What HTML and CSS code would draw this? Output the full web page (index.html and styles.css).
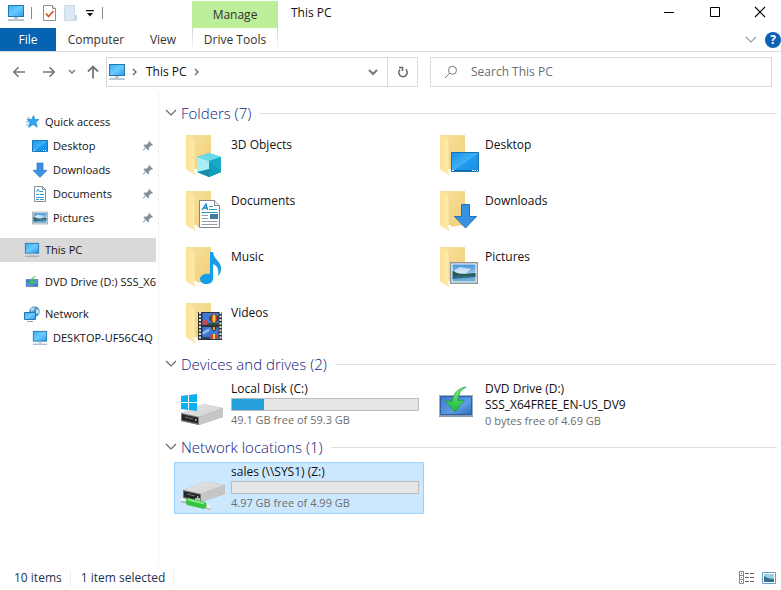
FILE: index.html
```html
<!DOCTYPE html>
<html lang="en">
<head>
<meta charset="utf-8">
<title>This PC</title>
<link rel="stylesheet" href="styles.css">
</head>
<body>
<svg class="defs" aria-hidden="true">
  <defs>
    <linearGradient id="screen" x1="0" y1="0" x2="1" y2="1"><stop offset="0" stop-color="#36b0f5"/><stop offset=".5" stop-color="#6bcaff"/><stop offset="1" stop-color="#2b9bed"/></linearGradient>
    <linearGradient id="desk" x1="0" y1="0" x2="1" y2="1"><stop offset="0" stop-color="#1593ea"/><stop offset=".5" stop-color="#42b0f6"/><stop offset=".52" stop-color="#229cee"/><stop offset="1" stop-color="#148eea"/></linearGradient>
    <linearGradient id="flap" x1="0" y1="0" x2="1" y2="0"><stop offset="0" stop-color="#fbe294"/><stop offset="1" stop-color="#fdeaac"/></linearGradient>
    <linearGradient id="back" x1="0" y1="0" x2="1" y2="1"><stop offset="0" stop-color="#f9e19c"/><stop offset="1" stop-color="#efcf79"/></linearGradient>
    <linearGradient id="sky" x1="0" y1="0" x2="0" y2="1"><stop offset="0" stop-color="#4593dc"/><stop offset="1" stop-color="#e2f3fb"/></linearGradient>
    <linearGradient id="metal" x1="0" y1="0" x2="1" y2="1"><stop offset="0" stop-color="#e6e6e6"/><stop offset="1" stop-color="#d0d0d0"/></linearGradient>
    <linearGradient id="green" x1="0" y1="0" x2="0" y2="1"><stop offset="0" stop-color="#85f18c"/><stop offset="1" stop-color="#12b932"/></linearGradient>
    <linearGradient id="panel" x1="0" y1="0" x2="1" y2="1"><stop offset="0" stop-color="#3c78c9"/><stop offset=".6" stop-color="#5f9be2"/><stop offset="1" stop-color="#3169b8"/></linearGradient>
    <symbol id="pc" viewBox="0 0 18 16"><rect x="1.5" y=".5" width="15" height="11" fill="url(#screen)" stroke="#2577ad"/><path d="M7 12h4v2H7z" fill="#bccbd6"/><path d="M1 15h16" stroke="#8fa6ba" stroke-width="1.2"/></symbol>
    <symbol id="folder" viewBox="0 0 48 48"><path d="M6 5h25v34L15 41z" fill="url(#back)"/><path d="M6 5l9 5v35l-3-2L6 39.500z" fill="url(#flap)"/><path d="M15 10v35" stroke="#f0d88e" stroke-width=".8"/><path d="M14 39h3v4l-2 2z" fill="#fff"/></symbol>
    <symbol id="pin" viewBox="0 0 12 12"><path d="M7 1l4 4-1 .8-.8-.3L7 7.700 7 9.500 6 10.200 3.800 8 1 11l-.5-.2L3.200 7.300 1.500 5.500l.8-.9 2 .1 2.300-2.300L6.300 1.600z" fill="#87919a"/></symbol>
    <symbol id="chev" viewBox="0 0 12 8"><path d="M1 1l5 5 5-5" fill="none" stroke="currentColor" stroke-width="1.100"/></symbol>
    <symbol id="photo" viewBox="0 0 28 22"><path d="M.7.700h26.600v20.600H.7z" fill="#fff" stroke="#8e959c" stroke-width="1.400"/><path d="M2.500 2.500h23v17h-23z" fill="url(#sky)"/><path d="M5 8l5-3 5 1 6 1-5 4H5z" fill="#fff" opacity=".6"/><path d="M2.500 9c3 1 5 2.500 9 3s9-1 14-1v3h-23z" fill="#285d4c"/><path d="M2.500 14h23v5.500h-23z" fill="#6facd4"/><path d="M2.500 14c8-1 12 1 15 0s5 0 8-1v2l-23 2z" fill="#2b6685"/></symbol>
    <symbol id="down" viewBox="0 0 24 24"><path d="M7.500 1.500h9v11h6L12 23 1.500 12.500h6z" fill="#3991e3" stroke="#2470b6"/></symbol>
    <symbol id="dvd" viewBox="0 0 48 48"><path d="M5 14h34v22H5z" fill="#9eb2c6"/><path d="M6.500 15.500h31v18h-31z" fill="url(#panel)" stroke="#2b5ea5"/><path d="M5 35h34" stroke="#75899d"/><path d="M32 6c-8 1-13 7-14 15l-7-2 10 12 9-12-6 1c0-6 2-11 8-14z" fill="url(#green)" stroke="#16a133" stroke-width=".8"/></symbol>
    <symbol id="drive" viewBox="0 0 44 24"><path d="M1 10L24 1l19 4v9L19 22 1 18z" fill="#a8a8a8"/><path d="M1 10L24 1l19 4-24 9z" fill="url(#metal)"/><path d="M19 14L43 5v9L19 22z" fill="#c6c6c6"/><path d="M1 10l18 4v8L1 18z" fill="#777"/><path d="M2 11.300l16 3.500v5.700L2 17z" fill="#252525"/><path d="M5 14l8 2" stroke="#777"/><path d="M15 16h1.500v2H15z" fill="#52e45b"/></symbol>
  </defs>
</svg>

<div class="window">
  <header class="titlebar">
    <div class="quick">
      <svg class="i-pc" aria-hidden="true"><use href="#pc"/></svg>
      <span class="rule"></span>
      <button aria-label="Properties"><svg width="13" height="16" viewBox="0 0 13 16"><path d="M.5.500h9l3 3v12H.5z" fill="#fff" stroke="#8e8e8e"/><path d="M9.500.500v3h3" fill="#eee" stroke="#8e8e8e"/><path d="M3 8.500l2.500 3L10.500 6" fill="none" stroke="#dd5426" stroke-width="1.800"/></svg></button>
      <button aria-label="New folder"><svg width="14" height="16" viewBox="0 0 14 16"><path d="M.5.500h10v10l2 1v4H.5z" fill="#dce7f4" stroke="#cedbea"/><path d="M10 10h3v5h-3z" fill="#c8d6e5"/></svg></button>
      <button aria-label="Customize toolbar"><svg width="8" height="8" viewBox="0 0 8 8"><path d="M0 1h8v1.200H0zM1 4h6L4 7.500z" fill="#111"/></svg></button>
      <span class="rule"></span>
    </div>
    <button class="manage">Manage</button>
    <h1>This PC</h1>
    <div class="controls">
      <button aria-label="Minimize"><svg width="12" height="12" viewBox="0 0 12 12"><path d="M1 6.500h10" stroke="#000"/></svg></button>
      <button aria-label="Maximize"><svg width="12" height="12" viewBox="0 0 12 12"><path d="M1.500 1.500h9v9h-9z" fill="none" stroke="#000"/></svg></button>
      <button aria-label="Close"><svg width="12" height="12" viewBox="0 0 12 12"><path d="M1 1l10 10M11 1L1 11" stroke="#000" stroke-width="1.100"/></svg></button>
    </div>
  </header>

  <nav class="ribbon" aria-label="Ribbon">
    <button class="file">File</button>
    <button class="computer">Computer</button>
    <button class="view">View</button>
    <button class="tools">Drive Tools</button>
    <div class="ribbon-end">
      <button aria-label="Expand the ribbon"><svg class="i-chev faint"><use href="#chev"/></svg></button>
      <button class="help" aria-label="Help">?</button>
    </div>
  </nav>

  <div class="addressbar">
    <div class="moves">
      <button aria-label="Back"><svg width="14" height="14" viewBox="0 0 14 14"><path d="M13 7H2M6.500 2.300L1.800 7l4.700 4.700" fill="none" stroke="#777" stroke-width="1.600"/></svg></button>
      <button aria-label="Forward"><svg width="14" height="14" viewBox="0 0 14 14"><path d="M1 7h11M7.500 2.300L12.200 7l-4.700 4.700" fill="none" stroke="#777" stroke-width="1.600"/></svg></button>
      <button aria-label="Recent locations"><svg width="8" height="6" viewBox="0 0 8 6"><path d="M1 1l3 3 3-3" fill="none" stroke="#777" stroke-width="1.400"/></svg></button>
      <button aria-label="Up"><svg width="14" height="14" viewBox="0 0 14 14"><path d="M7 13.500V2M2 6.500l5-5 5 5" fill="none" stroke="#777" stroke-width="1.800"/></svg></button>
    </div>
    <div class="path">
      <svg class="i-pc" aria-hidden="true"><use href="#pc"/></svg>
      <svg width="6" height="8" viewBox="0 0 6 8"><path d="M1 1l3 3-3 3" fill="none" stroke="#666" stroke-width="1.300"/></svg>
      <a href="#">This PC</a>
      <svg width="6" height="8" viewBox="0 0 6 8"><path d="M1 1l3 3-3 3" fill="none" stroke="#666" stroke-width="1.300"/></svg>
      <button class="history" aria-label="Previous locations"><svg width="10" height="8" viewBox="0 0 10 8"><path d="M1 2l4 4 4-4" fill="none" stroke="#777" stroke-width="2"/></svg></button>
      <button class="refresh" aria-label="Refresh"><svg width="12" height="12" viewBox="0 0 12 12"><path d="M8.800 3.300A4.200 4.200 0 1 1 3 3.500" fill="none" stroke="#666" stroke-width="1.500"/><path d="M2 1.500h3.500V5" fill="none" stroke="#666" stroke-width="1.500"/></svg></button>
    </div>
    <label class="search">
      <svg width="14" height="14" viewBox="0 0 14 14"><circle cx="8.500" cy="5.300" r="4" fill="none" stroke="#777"/><path d="M5.700 8.100L1 13" stroke="#777"/></svg>
      <input type="text" aria-label="Search This PC" placeholder="Search This PC">
    </label>
  </div>

  <div class="body">
    <nav class="tree" aria-label="Navigation">
      <ul>
        <li><a href="#"><svg width="16" height="16" viewBox="0 0 16 16"><path d="M9.500 1.500l1.500 4h4L12 8.200l1.200 5L9 10.500 4.500 13.500 6 8.500 3 5.500h4.500z" fill="#2fa5ec" stroke="#1b80c8" stroke-width=".6"/><path d="M3 4h3M2 8h3M2 11h3" stroke="#5abaf3"/></svg>Quick access</a>
          <ul>
            <li><a href="#"><svg width="16" height="16" viewBox="0 0 16 16"><path d="M.5 2.500h15v11H.5z" fill="url(#desk)" stroke="#1678bd"/><path d="M2 12.500h1M11 12.500h1m1 0h1" stroke="#fff"/></svg>Desktop<svg class="i-pin"><use href="#pin"/></svg></a></li>
            <li><a href="#"><svg width="16" height="16"><use href="#down"/></svg>Downloads<svg class="i-pin"><use href="#pin"/></svg></a></li>
            <li><a href="#"><svg width="16" height="16" viewBox="0 0 16 16"><path d="M2.500.500h8l3 3v12h-11z" fill="#fff" stroke="#84919c"/><path d="M10.500.500v3h3" fill="none" stroke="#84919c"/><path d="M4.500 6l1.500-3L7.500 6M8 5.500h3M4 8.500h3m1 0h4M4 11.500h8M4 13.500h3m1 0h4" fill="none" stroke="#2e9bc4"/></svg>Documents<svg class="i-pin"><use href="#pin"/></svg></a></li>
            <li><a href="#"><svg width="16" height="16"><use href="#photo"/></svg>Pictures<svg class="i-pin"><use href="#pin"/></svg></a></li>
          </ul>
        </li>
        <li><a href="#" class="current" aria-current="page"><svg width="16" height="16"><use href="#pc"/></svg>This PC</a></li>
        <li><a href="#"><svg width="16" height="16" viewBox="0 0 44 44"><use href="#dvd" width="48" height="48"/></svg>DVD Drive (D:) SSS_X64FREE_EN-US_DV9</a></li>
        <li><a href="#"><svg width="16" height="16" viewBox="0 0 16 16"><circle cx="10.500" cy="5.500" r="5.200" fill="#4795c9"/><path d="M7 2l4-1-1 3-3 2zM12 3l3 1v3l-3 1z" fill="#b7dcec"/><path d="M.5 6.500h11v7H.5z" fill="url(#screen)" stroke="#2577ad"/><path d="M3 15.500h6" stroke="#87a9bd"/></svg>Network</a>
          <ul>
            <li><a href="#"><svg width="16" height="16"><use href="#pc"/></svg>DESKTOP-UF56C4Q</a></li>
          </ul>
        </li>
      </ul>
    </nav>

    <main class="content">
      <section>
        <h2><svg class="i-chev"><use href="#chev"/></svg>Folders (7)</h2>
        <div class="tiles folders">
          <a href="#" class="tile"><svg class="i-tile" viewBox="0 0 48 48"><use href="#folder"/><path d="M17 27l12-4 12 4v15l-12 5-12-5z" fill="#21b5cf"/><path d="M17 27l12-4 12 4-12 4z" fill="#6ad9e8"/><path d="M17 27l12 4v10l-12 1z" fill="#a7eff5"/><path d="M29 31l12-4v15l-12-2z" fill="#17a9c5"/><path d="M17 42l12-3 12 3-12 5z" fill="#168daa"/><path d="M29 31v16l12-5z" fill="#0e9fbd"/></svg><span>3D Objects</span></a>
          <a href="#" class="tile"><svg class="i-tile" viewBox="0 0 48 48"><use href="#folder"/><path d="M17.500 22.500h27v19h-27z" fill="url(#desk)" stroke="#1772ad"/><path d="M18 40.500h26" stroke="#1269a7"/><path d="M18 40.500h2M38 40.500h1.500m1 0H42m1 0h1" stroke="#fff"/></svg><span>Desktop</span></a>
          <a href="#" class="tile"><svg class="i-tile" viewBox="0 0 48 48"><use href="#folder"/><path d="M19.500 14.500h15l5 5v22h-20z" fill="#fff" stroke="#7e858c"/><path d="M34.500 14.500v5h5" fill="#ececec" stroke="#7e858c"/><path d="M22 24l4-6 1.500 6M23.500 22h4" fill="none" stroke="#177ec8" stroke-width="1.300"/><path d="M29 20.500h4M29 23.500h8M21.500 26.500h16" stroke="#259bc5"/><path d="M30 28h8v5h-8z" fill="#3e7ba2"/><path d="M21.500 29.500H28M21.500 32.500H28M21.500 35.500h16M21.500 38.500h16" stroke="#92a1ac"/></svg><span>Documents</span></a>
          <a href="#" class="tile"><svg class="i-tile" viewBox="0 0 48 48"><use href="#folder"/><path d="M27.500 18.500h8v12h7L31.500 42 20.500 30.500h7z" fill="#3991e3" stroke="#2470b6"/></svg><span>Downloads</span></a>
          <a href="#" class="tile"><svg class="i-tile" viewBox="0 0 48 48"><use href="#folder"/><path d="M30 10h3c1 8 8 9 8 16 0 4-1 6-3 8 1-6 0-10-5-12v15c0 3-3 5-7 5-3 0-6-2-6-5 0-4 5-6 10-5z" fill="#159de8"/></svg><span>Music</span></a>
          <a href="#" class="tile"><svg class="i-tile" viewBox="0 0 48 48"><use href="#folder"/><svg x="16" y="20" width="28" height="22"><use href="#photo"/></svg></svg><span>Pictures</span></a>
          <a href="#" class="tile"><svg class="i-tile" viewBox="0 0 48 48"><use href="#folder"/><path d="M18 14h24v28H18z" fill="#333"/><path d="M20 14v28M40.500 14v28" stroke="#e1e4e7" stroke-width="2" stroke-dasharray="2 1.500"/><path d="M22.500 15h16v12h-16zM22.500 29h16v12h-16z" fill="#3c79d7"/><path d="M22.500 22h4l2 3h10v2h-16z" fill="#bd4d58"/><path d="M29 25h9.500v2H27z" fill="#24573a"/><ellipse cx="34" cy="20.500" rx="4.500" ry="4" fill="#42382b"/><ellipse cx="34" cy="20.500" rx="3" ry="4" fill="#cf352b"/><ellipse cx="34" cy="20.500" rx="1.500" ry="4" fill="#f2cc39"/><path d="M31 29h6l-2 4h-2z" fill="#443020"/><path d="M33 29h2v3h-2z" fill="#dda738"/><path d="M22.500 34l7-4v3l-7 4z" fill="#8fb8ea"/><ellipse cx="34" cy="38.500" rx="4" ry="2.500" fill="#dc3e2d"/><path d="M33 36h2v5h-2z" fill="#efd54d"/><path d="M22.500 39h6l3 2h-9z" fill="#243c63"/></svg><span>Videos</span></a>
        </div>
      </section>

      <section>
        <h2><svg class="i-chev"><use href="#chev"/></svg>Devices and drives (2)</h2>
        <div class="tiles">
          <a href="#" class="tile"><svg class="i-tile" viewBox="0 0 48 48"><svg x="0" y="22" width="44" height="24"><use href="#drive"/></svg><path d="M1 15l7-1v7H1zM9 14l8-1v8H9zM1 22h7v7l-7-1zM9 22h8v8l-8-1z" fill="#0bb0f0"/></svg>
            <div class="info"><span>Local Disk (C:)</span><div class="bar" role="img" aria-label="17% used"><div class="used" style="width:17%"></div></div><span class="free">49.1 GB free of 59.3 GB</span></div></a>
          <a href="#" class="tile"><svg class="i-tile" viewBox="0 0 48 48"><use href="#dvd"/></svg>
            <div class="info"><span>DVD Drive (D:)</span><span>SSS_X64FREE_EN-US_DV9</span><span class="free">0 bytes free of 4.69 GB</span></div></a>
        </div>
      </section>

      <section>
        <h2><svg class="i-chev"><use href="#chev"/></svg>Network locations (1)</h2>
        <div class="tiles">
          <a href="#" class="tile selected"><svg class="i-tile" viewBox="0 0 48 48"><path d="M1 36l6 1M25 42l6 2" stroke="#b6bdc1" stroke-width="5"/><path d="M1 35l6 1M25 41l6 2" stroke="#f2f5f6" stroke-width="3"/><svg x="2" y="16" width="44" height="24"><use href="#drive"/></svg><path d="M15 34h5v5h-5z" fill="#aebbc1"/><path d="M8 34l17 4a4 4 0 0 1-1 7L7 41q-3-4 1-7z" fill="#35c43c"/><path d="M8 35.500l16 4" stroke="#83e983" stroke-width="2"/></svg>
            <div class="info"><span>sales (\\SYS1) (Z:)</span><div class="bar" role="img" aria-label="Almost empty"></div><span class="free">4.97 GB free of 4.99 GB</span></div></a>
        </div>
      </section>
    </main>
  </div>

  <footer class="status">
    <span>10 items</span>
    <span>1 item selected</span>
    <div class="modes">
      <button aria-label="Details"><svg width="16" height="14" viewBox="0 0 16 14"><path d="M.5.500h4v12h-4zM.5 4.500h4M.5 8.500h4" fill="none" stroke="#888"/><path d="M2 2.500h1M2 6.500h1M2 10.500h1M6 2.500h4m1 0h4M6 6.500h4m1 0h4M6 10.500h4m1 0h4" stroke="#666"/></svg></button>
      <button aria-label="Large icons"><svg width="14" height="12" viewBox="0 0 14 12"><path d="M.5.500h13v11H.5z" fill="#fff" stroke="#6b9bbd"/><path d="M2 2h10v8H2z" fill="#9acbe8"/><path d="M2 4q4 3 10 3v3H2z" fill="#346f8d"/></svg></button>
    </div>
  </footer>
</div>
</body>
</html>
```
FILE: styles.css
```css
* { box-sizing: border-box; }
body {
  margin: 0;
  background: #fff;
  color: #111;
  font: 12px/16px "Open Sans", "Noto Sans", sans-serif;
}
h1, h2, ul { margin: 0; padding: 0; font-weight: 400; }
ul { list-style: none; }
a { color: inherit; text-decoration: none; }
button {
  display: flex;
  align-items: center;
  justify-content: center;
  padding: 0;
  border: 0;
  background: none;
  color: inherit;
  font: inherit;
}
svg { display: block; flex: none; }
.defs { position: absolute; width: 0; height: 0; }
.i-pc { width: 18px; height: 16px; }
.i-chev { width: 12px; height: 8px; color: #666; }
.i-pin { width: 12px; height: 12px; }
.i-tile { width: 48px; height: 48px; }

.window { display: flex; flex-direction: column; min-height: 100vh; }

.titlebar { display: flex; height: 28px; }
.quick { display: flex; align-items: center; width: 192px; padding: 0 0 2px 7px; }
.quick .rule { width: 1px; height: 12px; margin: 0 11px 0 6px; background: #888; }
.quick button { margin-right: 8px; }
.quick button:nth-of-type(3) { margin-right: 2px; }
.manage { width: 86px; margin-top: 1px; background: #bdee9a; color: #333; }
.titlebar h1 { padding-left: 13px; font-size: 12px; line-height: 26px; }
.controls { display: flex; margin-left: auto; height: 24px; }
.controls button { width: 46px; }
.controls button:last-child { width: 43px; }

.ribbon { display: flex; height: 24px; border-bottom: 1px solid #dadbdc; color: #333; }
.file { width: 56px; background: #0563b1; color: #fff; }
.computer { width: 80px; }
.view { width: 54px; margin-right: 2px; }
.tools {
  width: 86px;
  border: solid;
  border-width: 0 1px;
  border-image: linear-gradient(#d0d0d0, #fff) 1;
}
.ribbon-end { display: flex; align-items: center; gap: 8px; margin-left: auto; }
.faint { color: #999; }
.help {
  width: 16px;
  height: 16px;
  border-radius: 8px;
  background: #0c61b5;
  color: #fff;
  font-weight: 700;
}

.addressbar {
  display: grid;
  grid-template-columns: 106px minmax(0, 312fr) minmax(0, 354fr);
  align-items: center;
  height: 40px;
  padding-right: 9px;
}
.moves { display: flex; align-items: center; padding-left: 12px; }
.moves button { margin-right: 16px; }
.moves button:nth-child(2) { margin-right: 12px; }
.moves button:nth-child(3) { margin-right: 10px; }
.moves button:last-child { margin-right: 0; }
.path { display: flex; align-items: center; height: 30px; border: 1px solid #d9d9d9; }
.path .i-pc { margin: 0 6px 0 1px; }
.path a { margin: 0 7px 0 8px; }
.history { width: 28px; height: 100%; margin-left: auto; }
.refresh { width: 30px; height: 100%; border-left: 1px solid #d9d9d9; }
.search {
  display: flex;
  align-items: center;
  gap: 13px;
  height: 30px;
  margin-left: 12px;
  padding-left: 13px;
  border: 1px solid #d9d9d9;
}
.search input {
  flex: 1;
  min-width: 0;
  padding: 0;
  border: 0;
  outline: 0;
  background: none;
  font: inherit;
}
.search input::placeholder { color: #6d6d6d; opacity: 1; }

.body { display: flex; flex: 1; }
.tree {
  flex: none;
  width: 159px;
  padding: 18px 2px 0 0;
  border-right: 1px solid #f3f3f3;
  font-size: 11px;
}
.tree > ul { display: grid; grid-template-columns: minmax(0, 1fr); gap: 8px; }
.tree a {
  display: flex;
  align-items: center;
  gap: 5px;
  height: 24px;
  padding-left: 24px;
  overflow: hidden;
  white-space: nowrap;
}
.tree li li a { padding-left: 32px; }
.tree .current { background: #d9d9d9; }
.tree .i-pin { margin: 0 2px 0 auto; }

.content { display: flex; flex: 1; flex-direction: column; gap: 6px; min-width: 0; padding: 11px 4px 0 6px; }
h2 {
  display: flex;
  align-items: center;
  gap: 4px;
  height: 20px;
  margin-bottom: 5px;
  color: #10207a;
  font-size: 15px;
  font-weight: 300;
  line-height: 20px;
}
h2::after { content: ""; flex: 1; height: 1px; margin-left: 4px; background: #e0e0e0; }
.tiles { display: grid; grid-template-columns: repeat(auto-fill, 250px); gap: 4px; padding-left: 9px; }
.tile {
  display: flex;
  gap: 3px;
  height: 52px;
  padding: 1px 4px 1px 5px;
  border: 1px solid transparent;
  color: #111;
}
.folders .tile > span { padding-top: 7px; }
.selected { border-color: #99d1ff; background: #cce8ff; }
.info { flex: 1; min-width: 0; }
.info > span { display: block; white-space: nowrap; }
.info > .free { color: #6d6d6d; font-size: 11px; }
.bar { height: 13px; margin: 1px 0; border: 1px solid #bcbcbc; background: #e6e6e6; }
.used { height: 100%; background: #26a0da; }

.status { display: flex; align-items: center; height: 24px; padding: 0 5px 0 14px; color: #1e3250; }
.status > span { margin-right: 10px; padding-right: 8px; border-right: 1px solid #eee; }
.modes { display: flex; align-items: center; gap: 7px; margin-left: auto; }
```
